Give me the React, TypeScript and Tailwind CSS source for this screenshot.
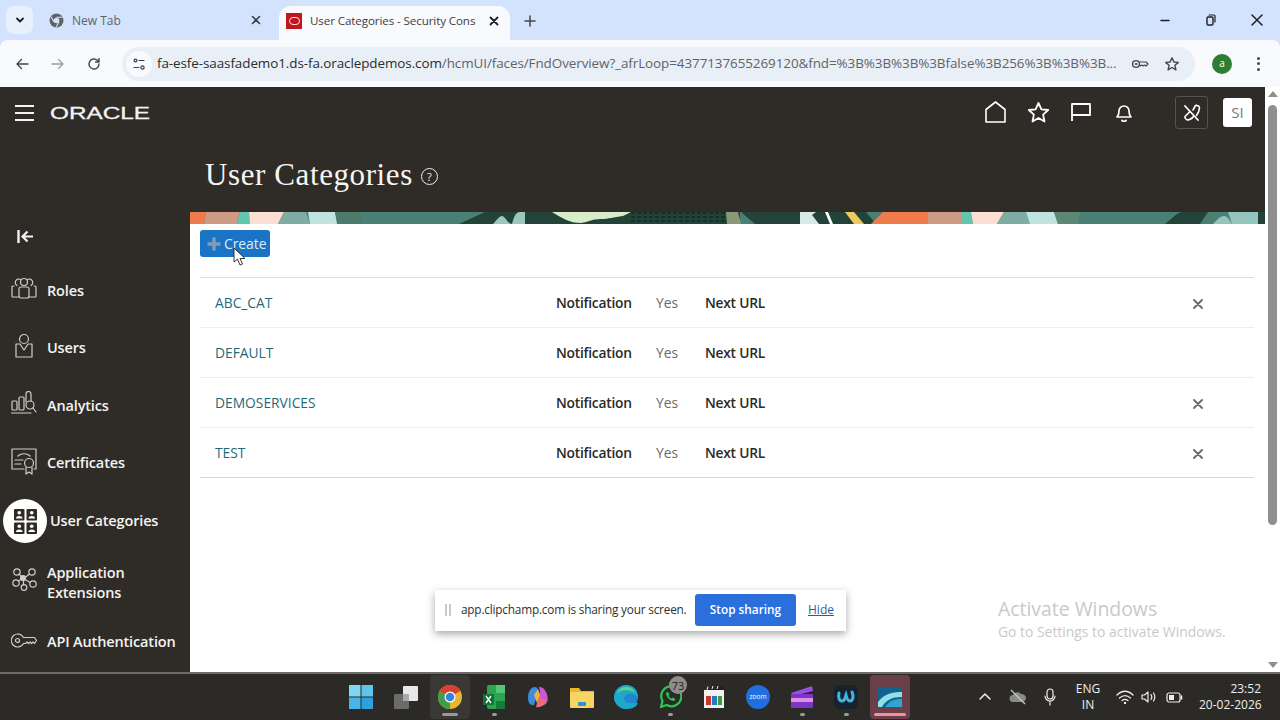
import React from "react";

const S = ({ w, h, vb, children, className = "" }: { w: number; h: number; vb?: string; children: React.ReactNode; className?: string }) => (
  <svg width={w} height={h} viewBox={vb ?? `0 0 ${w} ${h}`} fill="none" stroke="currentColor" strokeWidth={1.2} strokeLinecap="round" strokeLinejoin="round" className={`shrink-0 ${className}`}>
    {children}
  </svg>
);

function ChromeBar() {
  return (
    <div className="bg-[#d3e3fd]">
      <div className="flex h-10 items-end pl-[6px]">
        <div className="mb-[6px] flex h-[28px] w-[27px] items-center justify-center rounded-lg bg-[#e8f0fc] text-[#1f1f1f]">
          <S w={10} h={10}><path d="M2 3.500 5 6.500 8 3.500" strokeWidth={1.8} /></S>
        </div>
        <div className="ml-[16px] flex h-10 w-[230px] items-center text-[#5f6368]">
          <svg width={15} height={15} viewBox="0 0 14 14" className="shrink-0"><circle cx="7" cy="7" r="6.500" fill="#5f6368" /><circle cx="7" cy="7" r="2.600" fill="#d3e3fd" /><path d="M7 4h5.500M4.600 8.400 2 3.500M9.300 8.400 6.600 13" stroke="#d3e3fd" strokeWidth="1" /></svg>
          <span className="ml-[8px] pt-[1px] text-[12px] font-['Open_Sans',sans-serif]">New Tab</span>
          <span className="ml-auto mr-[18px] text-[#3c4043]"><S w={10} h={10}><path d="M1.500 1.500 8.500 8.500M8.500 1.500 1.500 8.500" strokeWidth={1.6} /></S></span>
        </div>
        <div className="flex h-[34px] w-[231px] items-center rounded-t-xl bg-[#f8fafd] pb-[5px] pl-[7px]">
          <div className="flex h-[16px] w-[16px] items-center justify-center bg-[#c2161c]">
            <div className="h-[8px] w-[11px] rounded-[4px] border-[1.5px] border-[#fde4e4]" />
          </div>
          <span className="ml-[8px] pt-[1px] whitespace-nowrap text-[11.600px] tracking-[-0.1px] text-[#3c4043] font-['Open_Sans',sans-serif]">User Categories - Security Cons</span>
          <span className="ml-auto mr-[11px] text-[#1f1f1f]"><S w={10} h={10}><path d="M1.500 1.500 8.500 8.500M8.500 1.500 1.500 8.500" strokeWidth={1.8} /></S></span>
        </div>
        <div className="ml-[13px] flex h-[34px] items-center pb-[5px] text-[#444746]">
          <S w={14} h={14}><path d="M7 2v10M2 7h10" strokeWidth={1.5} /></S>
        </div>
        <div className="ml-auto flex h-10 items-center gap-[32px] pr-[16px] text-[#1f1f1f]">
          <S w={14} h={14}><path d="M3 7.500h8" strokeWidth={1.5} /></S>
          <S w={14} h={14}><rect x="3" y="4" width="6" height="8" rx="1.200" strokeWidth={1.4} /><path d="M5 2h5a1 1 0 0 1 1 1v6" strokeWidth={1.2} /></S>
          <S w={14} h={14}><path d="M2 2 12 12M12 2 2 12" strokeWidth={1.5} /></S>
        </div>
      </div>
      <div className="flex h-[47px] items-center rounded-t-lg bg-[#f8fafd]">
        <div className="ml-[15px] text-[#444746]"><S w={14} h={14}><path d="M13 7H2M6.500 2.500 2 7l4.500 4.500" strokeWidth={1.4} /></S></div>
        <div className="ml-[22px] text-[#9aa0a6]"><S w={14} h={14}><path d="M1 7h11M7.500 2.500 12 7l-4.500 4.500" strokeWidth={1.3} /></S></div>
        <div className="ml-[22px] text-[#444746]"><S w={14} h={14}><path d="M12 7a5 5 0 1 1-1.600-3.700L12 5M12 1.500V5H8.500" strokeWidth={1.4} /></S></div>
        <div className="ml-[21px] flex h-[34px] w-[1073px] shrink-0 items-center rounded-full bg-[#e9eff7]">
          <div className="ml-[4px] flex h-[26px] w-[26px] shrink-0 items-center justify-center rounded-full bg-[#f8fafd] text-[#3c4043]">
            <S w={14} h={14}><circle cx="3.500" cy="3.500" r="1.400" /><path d="M7 3.500h5M2 10.500h5" /><circle cx="10.500" cy="10.500" r="1.600" /></S>
          </div>
          <span className="ml-[5px] whitespace-nowrap text-[13.450px] tracking-[-0.08px] text-[#2c2c2c] font-['Open_Sans',sans-serif]">
            fa-esfe-saasfademo1.ds-fa.oraclepdemos.com<span className="text-[#5f6368]">/hcmUI/faces/FndOverview?_afrLoop=4377137655269120&amp;fnd=%3B%3B%3B%3Bfalse%3B256%3B%3B%3B...</span>
          </span>
          <div className="ml-auto flex items-center gap-[15px] pr-[15px] text-[#444746]">
            <S w={18} h={12}><circle cx="5" cy="6" r="3.400" strokeWidth={1.4} /><circle cx="5" cy="6" r=".8" strokeWidth={1} /><path d="M8.500 4H15l2 2-2 2-1.500-1-1.500 1-1.500-1-1.500 1" strokeWidth={1.2} /></S>
            <S w={16} h={16}><path d="M8 1.800 9.900 6l4.400.4-3.400 2.900 1 4.500L8 11.500 4.100 13.800l1-4.500-3.400-2.900L6.100 6z" strokeWidth={1.4} /></S>
          </div>
        </div>
        <div className="ml-[17px] flex h-[20px] w-[20px] shrink-0 items-center justify-center rounded-full bg-[#2e7d32] text-[10px] text-white font-['Open_Sans',sans-serif]">a</div>
        <div className="ml-[25px] flex flex-col gap-[2.500px]">
          <div className="h-[3px] w-[3px] rounded-full bg-[#444746]" />
          <div className="h-[3px] w-[3px] rounded-full bg-[#444746]" />
          <div className="h-[3px] w-[3px] rounded-full bg-[#444746]" />
        </div>
      </div>
    </div>
  );
}

function NavItem({ icon, label, h, active }: { icon: React.ReactNode; label: React.ReactNode; h: string; active?: boolean }) {
  return (
    <div className={`flex items-center ${h} ${active ? "pl-[3px]" : "pl-[11px]"}`}>
      {active ? (
        <div className="flex h-[44px] w-[44px] items-center justify-center rounded-full bg-white">{icon}</div>
      ) : (
        <div className="flex w-[26px] justify-center text-[#cfcdc9]">{icon}</div>
      )}
      <div className={`${active ? "ml-[3px]" : "ml-[10px]"} text-[14.500px] font-semibold leading-[20px] tracking-[-0.15px] text-[#f4f3f1] font-['Open_Sans',sans-serif]`}>{label}</div>
    </div>
  );
}

function Sidebar() {
  return (
    <div className="w-[190px] shrink-0">
      <div className="flex h-[52px] items-center pl-[15px] text-[#f4f3f1]">
        <S w={19} h={16}><path d="M0 1h19M0 8h19M0 15h19" strokeWidth={1.8} strokeLinecap="butt" /></S>
        <span className="ml-[16px] origin-left scale-x-[1.430] text-[17px] leading-none text-[#f4f3f1] [-webkit-text-stroke:0.3px_#f4f3f1] font-['Liberation_Sans',sans-serif]">ORACLE</span>
      </div>
      <div className="h-[79px]" />
      <div className="flex h-[36px] items-center pl-[17px] text-[#f4f3f1]">
        <S w={17} h={15}><path d="M1.500 1v13" strokeWidth={2.4} strokeLinecap="butt" /><path d="M16 7.500H6M10.500 2.500 5.500 7.500l5 5" strokeWidth={2.2} strokeLinecap="butt" strokeLinejoin="miter" /></S>
      </div>
      <div className="h-[9px]" />
      <NavItem h="h-[56px]" label="Roles" icon={
        <S w={26} h={22} className="-mt-[7px]"><path d="M3 9H2a1 1 0 0 0-1 1v9a1 1 0 0 0 1 1h6M23 9h1a1 1 0 0 1 1 1v9a1 1 0 0 1-1 1h-6" /><rect x="8" y="10" width="10" height="11" rx="2" /><circle cx="13" cy="5" r="3.500" /><path d="M9.500 2.500A3.300 3.300 0 1 0 6 8.500M16.500 2.500A3.300 3.300 0 1 1 20 8.500" /></S>
      } />
      <NavItem h="h-[58px]" label="Users" icon={
        <S w={20} h={25} className="-mt-[6px]"><circle cx="10" cy="6" r="4.500" /><path d="M6 11H2v13h16V11h-4l-4 6z" /></S>
      } />
      <NavItem h="h-[58px]" label="Analytics" icon={
        <S w={26} h={23} className="-mt-[8px]"><rect x="1" y="10" width="5" height="9" rx="1" /><rect x="8" y="6" width="5" height="13" rx="1" /><path d="M15 11V3a2.500 2.500 0 0 1 5 0v7" /><circle cx="19" cy="14" r="4" /><path d="m22 17 3 4M0 22h20" /></S>
      } />
      <NavItem h="h-[56px]" label="Certificates" icon={
        <S w={26} h={27} className="-mt-[4px]"><path d="M13 21H1V1h24v20h-2" /><path d="M7 8c3-3 9-3 12 0M4 12h8M4 16h6" /><circle cx="18" cy="15" r="4.500" /><path d="M15 19v7l3-2 3 2v-7" /></S>
      } />
      <NavItem h="h-[60px]" active label="User Categories" icon={
        <svg width="23" height="25" viewBox="0 0 23 25" className="shrink-0">
          {[[0, 0], [12.500, 0], [0, 13.500], [12.500, 13.500]].map(([x, y], i) => (
            <g key={i} transform={`translate(${x} ${y})`}>
              <rect x="0" y="0" width="10.500" height="11.500" rx="1" fill="#2f2c28" />
              <circle cx="5.250" cy="3.800" r="1.800" fill="#fff" />
              <path d="M2 9.500c0-3.200 6.500-3.200 6.500 0z" fill="#fff" />
            </g>
          ))}
        </svg>
      } />
      <NavItem h="h-[64px]" label={<>Application<br />Extensions</>} icon={
        <S w={25} h={23} className="-mt-[8px]"><circle cx="5" cy="4" r="3.200" /><circle cx="20" cy="4" r="3.200" /><circle cx="4" cy="15" r="3.200" /><circle cx="21" cy="16" r="3.200" /><circle cx="12" cy="19.500" r="2.800" /><circle cx="11" cy="10" r="2.500" fill="currentColor" /><path d="m7 6 3 3M17.500 6 13 9.500M6.500 13l3-2M13 11.500l5 3M11.500 12.500v4.500" /></S>
      } />
      <NavItem h="h-[54px]" label="API Authentication" icon={
        <S w={26} h={15} className="-mt-[4px]"><path d="M12.500 4.500H23.500L25.500 7.500 23.500 10.500 22 9 20.500 10.500 19 9 17.500 10.500 16 9 14.500 10.500H12.500A6.500 6.500 0 1 1 12.500 4.500z" /><circle cx="6.500" cy="7.500" r="2" /></S>
      } />
    </div>
  );
}

function Banner() {
  return (
    <svg className="block h-[12px] w-full" viewBox="0 0 1075 12" preserveAspectRatio="none">
      <rect width="1075" height="12" fill="#4a7f73" />
      <path d="M0 0h16l-2 12H0z" fill="#ef7a4a" />
      <path d="M16 0h34l-3 12H14z" fill="#cd9a85" />
      <path d="M50 0h9l1 12H47z" fill="#62c6ae" />
      <path d="M59 0h35l-6 12H60z" fill="#fbdfd3" />
      <path d="M94 0h24l-2 0 4 12H88z" fill="#81aca4" />
      <path d="M118 0h27l3 12h-28z" fill="#c0e3de" />
      <path d="M145 0h24l3 12h-25z" fill="#4e7a6c" />
      <path d="M269 12 295 0h40l8 12z" fill="#234238" />
      <path d="M303 12c4-4 6-8 9-8s6 8 10 8z" fill="#9cc5be" />
      <path d="M322 12c2-8 4-12 8-12h8l10 12z" fill="#9cc5be" />
      <path d="M335 0h215v12H335z" fill="#234238" />
      <path d="M362 0h79l-8 4c-10 1-14 3-22 3-10 0-12 3-20 4-12 0-19-5-29-11z" fill="#d8ecc9" />
      <path d="M441 1h100M441 5h100M441 9h100" stroke="#17312a" strokeWidth="2" strokeDasharray="4 2" />
      <path d="M536 0h12l3 12h-14z" fill="#8a9a78" />
      <path d="M551 0h80l14 12h-80z" fill="#234238" />
      <path d="M576 0h45l-4 12h-32z" fill="#234238" />
      <path d="M610 0h16l-4 3 7 9h-19z" fill="#d6ebe4" />
      <path d="M626 0 636 12h50l-10-12z" fill="#234238" />
      <path d="m635 0 5 12h3l-5-12z" fill="#fff" />
      <path d="M655 0h9l10 12h-10z" fill="#f0c95e" />
      <path d="M681 12 693 0h45v12z" fill="#ef7a4a" />
      <path d="M738 0h33v12h-33z" fill="#cd9a85" />
      <path d="M771 0h10l2 12h-12z" fill="#62c6ae" />
      <path d="M781 0h33l-7 12h-24z" fill="#fbdfd3" />
      <path d="M814 0h22l4 12h-33z" fill="#81aca4" />
      <path d="M836 0h28l4 12h-28z" fill="#c0e3de" />
      <path d="M864 0h26l-2 12h-20z" fill="#5d8775" />
      <path d="M975 12c8-6 12-12 18-12h25l-8 12z" fill="#234238" />
      <path d="M1023 12c4-4 7-8 11-8s6 5 8 8z" fill="#93c5bc" />
      <path d="M1038 0h30v12h-26z" fill="#93c5bc" />
      <path d="M1068 0h7v12h-7z" fill="#234238" />
    </svg>
  );
}

function Row({ name, del, last }: { name: string; del: boolean; last?: boolean }) {
  return (
    <div className={`flex h-[50px] items-center border-b pt-[2px] ${last ? "border-[#d8d8d6]" : "border-[#eeeeec]"} font-['Open_Sans',sans-serif] text-[13.800px]`}>
      <div className="w-[356px] pl-[15px] font-medium text-[#1f6a78]">{name}</div>
      <div className="w-[100px] font-semibold tracking-[-0.25px] text-[#2b2a27]">Notification</div>
      <div className="w-[49px] text-[#6b6a66]">Yes</div>
      <div className="font-semibold tracking-[-0.25px] text-[#2b2a27]">Next URL</div>
      {del && <div className="ml-auto mr-[51px] text-[#6a6864]"><S w={10} h={10}><path d="M1 1 9 9M9 1 1 9" strokeWidth={1.8} /></S></div>}
    </div>
  );
}

function Main() {
  return (
    <div className="flex min-w-0 flex-1 flex-col">
      <div className="flex h-[50px] shrink-0 items-center justify-end text-white">
        <div className="mr-[13px] flex items-center">
          <S w={21} h={22}><path d="M1 21V8.500L10.500 1 20 8.500V21z" strokeWidth={1.6} /></S>
          <S w={23} h={22} className="ml-[21px]"><path d="M11.500 2 14.400 8.300 21.200 9 16.100 13.600 17.500 20.500 11.500 17 5.500 20.500 6.900 13.600 1.800 9 8.600 8.300z" strokeWidth={1.8} /></S>
          <S w={20} h={20} className="ml-[21px]"><path d="M1 19V2h18v11H1" strokeWidth={1.8} strokeLinecap="butt" /></S>
          <S w={18} h={20} className="ml-[24px]"><path d="M2 15c2-2 2-3 2-6a5 5 0 0 1 10 0c0 3 0 4 2 6z" strokeWidth={1.7} /><path d="M7 18.500c1 1 3 1 4 0" strokeWidth={1.8} /></S>
          <div className="ml-[42px] flex h-[33px] w-[33px] items-center justify-center rounded-[3px] border border-[#55534f]">
            <S w={18} h={17}><path d="m2 2 13 14" strokeWidth={1.800} /><path d="M10 6 12.500 1.500c1-.5 4 .5 4 2 0 4-1.500 6-3 8M7 7.500 2 12.500c-.5 1.500 1 3 2.500 3.500 2.500 0 4.500-1.500 6-3.500" strokeWidth={1.600} /></S>
          </div>
          <div className="ml-[15px] flex h-[29px] w-[29px] items-center justify-center rounded-[3px] bg-white text-[15px] text-[#7b7a77] font-['Open_Sans',sans-serif]">SI</div>
        </div>
      </div>
      <div className="flex h-[75px] shrink-0 items-start pl-[15px] pt-[17px]">
        <h1 className="text-[31px] leading-[42px] tracking-[0.6px] text-[#f6f5f2] font-['Liberation_Serif',serif]">User Categories</h1>
        <div className="ml-[8px] mt-[14px] flex h-[17px] w-[17px] items-center justify-center rounded-full border-[1.5px] border-[#eeeeec] text-[11px] leading-none text-[#eeeeec] font-['Open_Sans',sans-serif]">?</div>
      </div>
      <Banner />
      <div className="flex-1 bg-white pl-[10px] pr-[11px] pt-[6px]">
        <div className="h-[48px] border-b border-[#dddddb]">
          <div className="relative flex h-[27px] w-[70px] items-center rounded-[3px] bg-[#1a73c4] pl-[7px]">
            <S w={14} h={14}><path d="M7 0.500v13M0.500 7h13" strokeWidth={3.4} strokeLinecap="butt" stroke="#7f9db8" /></S>
            <span className="ml-[3px] text-[14px] font-medium tracking-[-0.1px] text-[#d9eef8] font-['Open_Sans',sans-serif]">Create</span>
            <svg width="13" height="19" viewBox="0 0 13 19" className="absolute left-[33px] top-[17px]"><path d="M1 1v14l3.500-3 2.500 6 2.500-1-2.500-5.500H12z" fill="#fff" stroke="#222" strokeWidth="0.900" strokeLinejoin="round" /></svg>
          </div>
        </div>
        <Row name="ABC_CAT" del />
        <Row name="DEFAULT" del={false} />
        <Row name="DEMOSERVICES" del />
        <Row name="TEST" del last />
      </div>
    </div>
  );
}

function Scrollbar() {
  return (
    <div className="flex w-[15px] shrink-0 flex-col items-center bg-white">
      <div className="mt-[4px] h-0 w-0 border-x-[5px] border-b-[6px] border-x-transparent border-b-[#8f8f8f]" />
      <div className="mt-[8px] h-[420px] w-[9px] rounded-full bg-[#8f8f8f]" />
      <div className="mt-auto mb-[4px] h-0 w-0 border-x-[5px] border-t-[6px] border-x-transparent border-t-[#8f8f8f]" />
    </div>
  );
}

function Dot({ w = "w-[5px]", c = "bg-[#9a9a96]" }: { w?: string; c?: string }) {
  return <div className={`mx-auto h-[3px] ${w} rounded-full ${c}`} />;
}

function TaskIcon({ children, dot, active, pink }: { children: React.ReactNode; dot?: boolean; active?: boolean; pink?: boolean }) {
  return (
    <div className={`flex h-[44px] w-[40px] flex-col items-center justify-end rounded-[4px] pb-[3px] ${active ? "bg-[#3a3835]" : ""} ${pink ? "bg-[#6b3f48]" : ""}`}>
      <div className="flex h-[32px] items-center justify-center">{children}</div>
      <div className="h-[3px] w-full">
        {dot && <Dot w={active ? "w-[16px]" : "w-[5px]"} />}
        {pink && <Dot w="w-[32px]" c="bg-[#ee8fa6]" />}
      </div>
    </div>
  );
}

function Taskbar() {
  return (
    <div className="flex h-[48px] items-center border-t-2 border-[#6e6c68] bg-[#2c2a26] font-['Open_Sans',sans-serif] text-[#eeeeec]">
      <div className="ml-[341px] flex items-center gap-[4px]">
        <TaskIcon>
          <svg width="24" height="24" viewBox="0 0 24 24"><rect x="0" y="0" width="11.500" height="11.500" fill="#7fd6f5" /><rect x="12.500" y="0" width="11.500" height="11.500" fill="#5fc4ee" /><rect x="0" y="12.500" width="11.500" height="11.500" fill="#48b4e8" /><rect x="12.500" y="12.500" width="11.500" height="11.500" fill="#2f9fe0" /></svg>
        </TaskIcon>
        <div className="ml-[1px]">
          <TaskIcon>
            <svg width="24" height="24" viewBox="0 0 24 24"><rect x="0" y="9" width="15" height="15" rx="1" fill="#6b6b6b" /><rect x="9" y="1" width="15" height="15" rx="1" fill="#e8e8e8" /><rect x="9" y="9" width="6" height="7" fill="#a9a9a9" /></svg>
          </TaskIcon>
        </div>
        <TaskIcon dot active>
          <svg width="24" height="24" viewBox="0 0 24 24"><circle cx="12" cy="12" r="12" fill="#e5b82f" /><path d="M12 12 1.500 6A12 12 0 0 1 22.400 6z" fill="#d9402f" /><path d="M12 12 1.600 6A12 12 0 0 0 12 24z" fill="#3f9d4c" /><circle cx="12" cy="12" r="5.500" fill="#fff" /><circle cx="12" cy="12" r="4.300" fill="#3c7fe0" /></svg>
        </TaskIcon>
        <TaskIcon dot>
          <svg width="22" height="24" viewBox="0 0 22 24"><rect x="4" y="0" width="18" height="24" rx="2" fill="#2da44e" /><rect x="13" y="0" width="9" height="8" fill="#55c673" /><rect x="13" y="16" width="9" height="8" fill="#157a3a" /><rect x="0" y="9" width="11" height="11" rx="1" fill="#11733c" /><path d="m3 11 5 7M8 11l-5 7" stroke="#fff" strokeWidth="1.300" /></svg>
        </TaskIcon>
        <TaskIcon>
          <svg width="24" height="24" viewBox="0 0 24 24"><path d="M9 2c-5 0-7 6-7 11 0 5 3 8 6 7l4-12c1-3-1-6-3-6z" fill="#3f8be0" /><path d="M13 2c3 0 5 1 7 5 3 6 2 13-3 13-3 0-5-1-6-3l3-10z" fill="#c85bd0" /><path d="M10 22c5 1 9-2 10-7l-6-2-3 5z" fill="#ee6a7a" /><path d="M8 10 12 4l2 6-3 8z" fill="#f2b53a" /></svg>
        </TaskIcon>
        <TaskIcon>
          <svg width="24" height="24" viewBox="0 0 24 24"><path d="M0 3h9l2 3h13v5H0z" fill="#e8b92e" /><rect x="0" y="7" width="24" height="16" rx="1" fill="#f8d563" /><rect x="8" y="17" width="8" height="4" rx="1" fill="#2f8fdc" /></svg>
        </TaskIcon>
        <TaskIcon>
          <svg width="24" height="24" viewBox="0 0 24 24"><circle cx="12" cy="12" r="12" fill="#1d88d0" /><path d="M24 13c-3-5-12-6-14 0 0 5 5 6 14 5-1 3-5 6-12 6C6 24 0 18 0 12 1 4 8 0 12 0c7 0 12 5 12 13z" fill="#1ea9c9" /><path d="M21 8c-1-4-5-6-9-6-5 0-8 3-9 7 3-4 12-6 18-1z" fill="#5fd38a" /></svg>
        </TaskIcon>
        <div className="relative">
          <TaskIcon dot>
            <svg width="24" height="24" viewBox="0 0 24 24" fill="none"><path d="M3 22 4.500 16A10 10 0 1 1 8.500 20z" stroke="#2dc653" strokeWidth="2.200" strokeLinejoin="round" /><path d="M8 8c0 4 4 8 8 8l1.500-2-3-1.500-1 1c-1.500-.5-2.500-1.500-3-3l1-1L10 7z" fill="#2dc653" /></svg>
          </TaskIcon>
          <div className="absolute left-[19px] top-[1px] flex h-[18px] w-[18px] items-center justify-center rounded-full bg-[#8e8e8a] text-[11px] leading-none text-[#1f1f1f]">73</div>
        </div>
        <TaskIcon>
          <svg width="22" height="24" viewBox="0 0 22 24"><rect x="1" y="5" width="20" height="18" fill="#f1f1ef" /><path d="m1 5 19-4 1 4z" fill="#222" /><path d="M4 5 5 1.500M9 4l1-3M14 4l1-3" stroke="#eee" strokeWidth="1" /><rect x="3" y="11" width="5" height="9" fill="#c33" /><rect x="9" y="11" width="5" height="9" fill="#2a7ac0" /><rect x="15" y="11" width="4" height="9" fill="#3a9a4a" /></svg>
        </TaskIcon>
        <TaskIcon>
          <div className="flex h-[24px] w-[24px] items-center justify-center rounded-full bg-[#1f6fe0] text-[6.500px] text-white">zoom</div>
        </TaskIcon>
        <TaskIcon dot>
          <svg width="24" height="24" viewBox="0 0 24 24"><path d="M1 8 22 1l1 5L3 11z" fill="#9a4fe0" /><rect x="1" y="9" width="22" height="14" rx="1" fill="#7c35c7" /><rect x="1" y="13" width="22" height="4" fill="#e38ee8" /></svg>
        </TaskIcon>
        <TaskIcon dot>
          <svg width="24" height="24" viewBox="0 0 24 24" fill="none"><rect width="24" height="24" rx="6" fill="#16222e" /><path d="M5 8c-1 4 0 8 3 8s3-3 4-6c1 4 2 6 4 6 3 0 4-5 2-9" stroke="#3fb6e8" strokeWidth="3" strokeLinecap="round" /></svg>
        </TaskIcon>
        <TaskIcon pink>
          <svg width="24" height="20" viewBox="0 0 24 20"><rect width="24" height="20" rx="1" fill="#16628e" /><path d="M0 15C6 7 14 5 24 5v5C14 10 8 13 4 20H0z" fill="#8fe0e8" /><path d="M7 20c4-6 9-8 17-8v8z" fill="#2fa6cf" /></svg>
        </TaskIcon>
      </div>
      <div className="ml-[68px] flex items-center">
        <S w={14} h={14}><path d="m2 9 5-5 5 5" strokeWidth={1.500} /></S>
        <svg width="18" height="16" viewBox="0 0 18 16" className="ml-[17px]"><path d="M4 13a3.500 3.500 0 0 1 0-7c1-3 6-4 8-1 3 0 5 2 5 4s-2 4-4 4z" fill="#8a8a86" /><path d="M2 1 16 15" stroke="#d0d0cc" strokeWidth="1.200" /></svg>
        <S w={14} h={18} className="ml-[16px]"><rect x="4" y="1" width="6" height="10" rx="3" /><path d="M2 8a5 5 0 0 0 10 0M7 13v4" /></S>
        <div className="ml-[14px] w-[34px] text-center text-[12px] leading-[16px]">ENG<br />IN</div>
        <S w={18} h={14} className="ml-[11px]"><path d="M1 5c5-5 11-5 16 0M3.500 8c3.500-3 7.500-3 11 0M6 10.500c2-1.500 4-1.500 6 0" strokeWidth={1.300} /><circle cx="9" cy="13" r=".6" /></S>
        <S w={17} h={14} className="ml-[7px]"><path d="M1 5h2.500L7 2v10L3.500 9H1zM10 4.500c1 1.500 1 3.500 0 5M12.500 3c1.600 2.500 1.600 5.500 0 8" /></S>
        <S w={17} h={11} className="ml-[8px]"><rect x="1" y="1" width="13" height="9" rx="2" /><rect x="3" y="3" width="5" height="5" fill="currentColor" strokeWidth={0} /><path d="M15.500 4v3" strokeWidth={1.500} /></S>
        <div className="ml-[16px] w-[62px] whitespace-nowrap text-right text-[12px] leading-[16px]">23:52<br />20-02-2026</div>
      </div>
    </div>
  );
}

export default function App() {
  return (
    <div className="relative flex h-[720px] w-[1280px] flex-col overflow-hidden font-['Open_Sans',sans-serif]">
      <ChromeBar />
      <div className="flex min-h-0 flex-1">
        <div className="flex min-w-0 flex-1 bg-[#2f2c28]">
          <Sidebar />
          <Main />
        </div>
        <Scrollbar />
      </div>
      <Taskbar />
      <div className="absolute left-[435px] top-[590px] flex h-[41px] w-[411px] items-center bg-white pb-[2px] shadow-[0_3px_8px_rgba(0,0,0,0.35)]">
        <div className="ml-[10px] flex gap-[2px]"><div className="h-[12px] w-[2px] bg-[#c9c9c9]" /><div className="h-[12px] w-[2px] bg-[#c9c9c9]" /></div>
        <span className="ml-[10px] w-[223px] whitespace-nowrap text-[11.800px] tracking-[-0.2px] text-[#2f2f2f]">app.clipchamp.com is sharing your screen.</span>
        <div className="ml-[11px] flex h-[32px] w-[101px] items-center justify-center rounded-[3px] bg-[#2b6fdc] text-[11.800px] font-semibold text-white">Stop sharing</div>
        <span className="ml-[12px] text-[12px] text-[#1f5fa8] underline">Hide</span>
      </div>
      <div className="absolute left-[998px] top-[597px] whitespace-nowrap text-[#c9c9c7]">
        <div className="text-[19.400px] leading-[24px]">Activate Windows</div>
        <div className="mt-[1px] text-[13.900px] leading-[20px]">Go to Settings to activate Windows.</div>
      </div>
    </div>
  );
}
